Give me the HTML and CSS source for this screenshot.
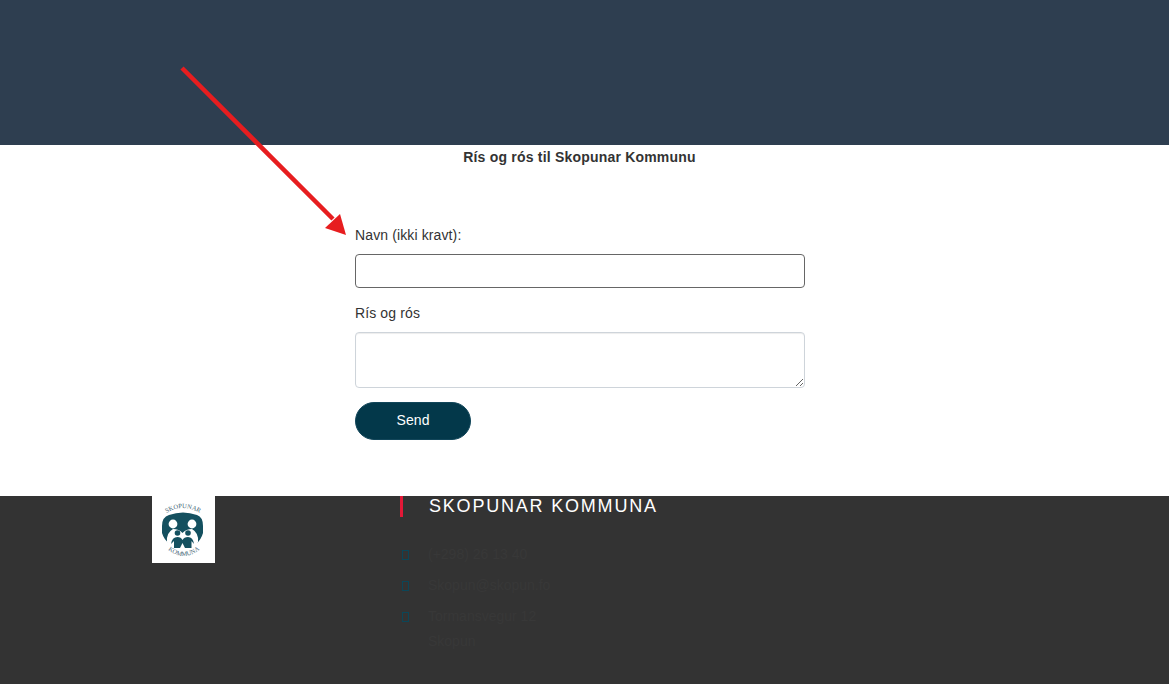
FILE: index.html
```html
<!DOCTYPE html>
<html lang="en">
<head>
    <meta charset="UTF-8">
    <meta name="viewport" content="width=device-width, initial-scale=1.0">
    <title>Rís og rós</title>
    <link rel="stylesheet" href="styles.css">
</head>
<body>
    <header class="top-band"></header>

    <main class="feedback">
        <h1 class="feedback-title">Rís og rós til Skopunar Kommunu</h1>
        <form class="feedback-form">
            <label class="field-label" for="navn">Navn (ikki kravt):</label>
            <input class="field-input" type="text" id="navn">
            <label class="field-label" for="ros">Rís og rós</label>
            <textarea class="field-input field-area" id="ros"></textarea>
            <button type="button" class="send-button">Send</button>
        </form>
    </main>

    <footer class="site-footer">
        <div class="footer-logo">
            <svg viewBox="0 0 63 67" width="63" height="67" xmlns="http://www.w3.org/2000/svg">
                <path id="arcTop" d="M10 20 Q31 4 52 20" fill="none"/>
                <path id="arcBottom" d="M11 49 Q31 71 53 49" fill="none"/>
                <!-- arch behind the family -->
                <path d="M10 30 Q10 21 17 19 Q31 14 45 19 Q51 21 51 30 L51 37 Q49 44 44 48 L18 48 Q12 44 10 37 Z" fill="#14505f"/>
                <!-- parents -->
                <circle cx="21" cy="28" r="4.4" fill="#fff"/>
                <circle cx="40" cy="28" r="4.4" fill="#fff"/>
                <path d="M15 46 Q14 37 21 33 Q27 33 30.500 37 Q34 33 40 33 Q47 37 46 46 L44 50 L17 50 Z" fill="#fff"/>
                <!-- children -->
                <circle cx="25.500" cy="37" r="2.800" fill="#14505f"/>
                <circle cx="36" cy="37" r="2.800" fill="#14505f"/>
                <path d="M19 48 Q20 41 25.500 41 Q29 41 30.500 44 Q32 41 36 41 Q41 41 42 48 L39.500 45 L39.500 52 L33 52 L30.500 47 L28 52 L22 52 L22 45 Z" fill="#14505f"/>
                <text class="logo-text"><textPath href="#arcTop" startOffset="50%" text-anchor="middle">SKOPUNAR</textPath></text>
                <text class="logo-text"><textPath href="#arcBottom" startOffset="50%" text-anchor="middle">KOMMUNA</textPath></text>
            </svg>
        </div>
        <div class="footer-info">
            <h2 class="footer-heading">SKOPUNAR KOMMUNA</h2>
            <ul class="contact-list">
                <li class="contact-row"><span class="contact-icon"></span><span>(+298) 26 13 40</span></li>
                <li class="contact-row"><span class="contact-icon"></span><span>Skopun@skopun.fo</span></li>
                <li class="contact-row"><span class="contact-icon"></span><span>Tormansvegur 12<br>Skopun</span></li>
            </ul>
        </div>
    </footer>

    <!-- red arrow drawn over the page -->
    <svg class="arrow-overlay" width="1169" height="684" xmlns="http://www.w3.org/2000/svg">
        <line x1="182" y1="68" x2="333" y2="219" stroke="#e71d1f" stroke-width="4.5"/>
        <polygon points="346,235 325,228 340,214" fill="#e71d1f"/>
    </svg>
</body>
</html>
```
FILE: styles.css
```css
* {
    margin: 0;
    padding: 0;
    box-sizing: border-box;
    font-family: "Liberation Sans", Arial, sans-serif;
}

body {
    height: 684px;
    overflow: hidden;
    position: relative;
    background: #fff;
    color: #333;
}

.top-band {
    height: 145px;
    background-color: #2e3e50;
}

.feedback {
    height: 351px;
}

.feedback-title {
    width: 465px;
    margin-left: 347px;
    padding-top: 4px;
    text-align: center;
    font-size: 14px;
    line-height: 16px;
    font-weight: 700;
    letter-spacing: 0.2px;
    color: #333;
}

.feedback-form {
    width: 450px;
    margin: 62px 0 0 355px;
    display: flex;
    flex-direction: column;
    align-items: flex-start;
}

.field-label {
    font-size: 14px;
    line-height: 16px;
    letter-spacing: 0.12px;
    color: #333;
    margin-bottom: 11px;
}

.field-input {
    display: block;
    width: 450px;
    height: 34px;
    border: 1px solid #666;
    border-radius: 4px;
    background: #fff;
    margin-bottom: 17px;
}

.field-area {
    height: 56px;
    border-color: #ced4da;
    box-shadow: inset 0 1px 1px rgba(0, 0, 0, 0.075);
    margin-bottom: 14px;
}

.send-button {
    width: 116px;
    height: 38px;
    border: 1px solid #12465a;
    border-radius: 19px;
    background-color: #03384a;
    color: #fff;
    font-size: 14px;
    letter-spacing: 0.1px;
    padding-bottom: 2px;
}

.site-footer {
    height: 188px;
    background-color: #333;
    display: flex;
    align-items: flex-start;
    padding-left: 152px;
}

.footer-logo {
    width: 63px;
    height: 67px;
    background: #fff;
    flex-shrink: 0;
}

.footer-logo svg {
    display: block;
}

.logo-text textPath {
    font-family: "Liberation Serif", serif;
    font-size: 6.5px;
    fill: #3f6473;
}

.footer-info {
    margin-left: 185px;
}

.footer-heading {
    height: 21px;
    border-left: 3px solid #e31837;
    padding-left: 26px;
    font-size: 18px;
    line-height: 20px;
    font-weight: 400;
    letter-spacing: 1.8px;
    color: #fff;
}

.contact-list {
    list-style: none;
    margin-top: 25px;
}

.contact-row {
    display: flex;
    align-items: flex-start;
    font-size: 14px;
    line-height: 25px;
    padding-bottom: 6px;
    color: #383838;
}

.contact-icon {
    width: 7px;
    height: 10px;
    border: 1px solid #0b4658;
    margin: 8px 19px 0 2px;
}

.arrow-overlay {
    position: absolute;
    left: 0;
    top: 0;
    pointer-events: none;
}
```
